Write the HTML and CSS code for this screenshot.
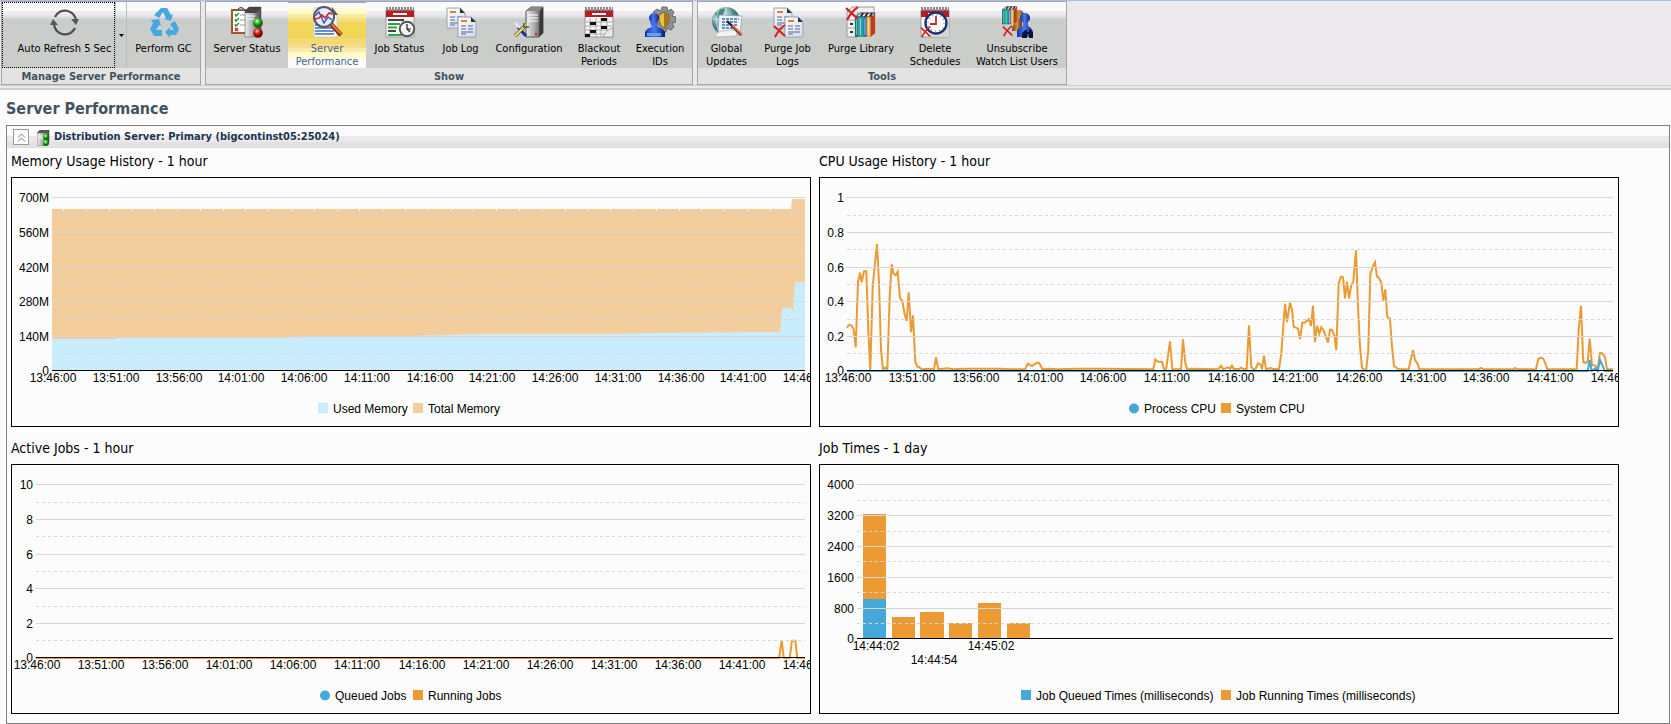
FILE: index.html
```html
<!DOCTYPE html>
<html lang="en">
<head>
<meta charset="utf-8">
<title>Server Performance</title>
<link rel="stylesheet" href="styles.css">
</head>
<body>
<svg class="defs" width="0" height="0" aria-hidden="true">
  <defs>
    <linearGradient id="steel" x1="0" x2="1"><stop offset="0" stop-color="#eee"/><stop offset=".5" stop-color="#aaa"/><stop offset="1" stop-color="#444"/></linearGradient>
    <linearGradient id="page" x1="0" y1="0" x2="1" y2="1"><stop offset="0" stop-color="#fff"/><stop offset="1" stop-color="#cfd9ee"/></linearGradient>
    <linearGradient id="blue" x1="0" x2="1"><stop offset="0" stop-color="#1230a8"/><stop offset=".45" stop-color="#4a78f0"/><stop offset="1" stop-color="#0c1c80"/></linearGradient>
    <linearGradient id="amber" x1="0" x2="1"><stop offset="0" stop-color="#6a4208"/><stop offset=".5" stop-color="#d09040"/><stop offset="1" stop-color="#5a3404"/></linearGradient>
    <radialGradient id="green" cx=".4" cy=".3"><stop offset="0" stop-color="#e0ffd8"/><stop offset=".5" stop-color="#38c828"/><stop offset="1" stop-color="#0a6a08"/></radialGradient>
    <radialGradient id="red" cx=".4" cy=".3"><stop offset="0" stop-color="#ffd8d0"/><stop offset=".5" stop-color="#e02820"/><stop offset="1" stop-color="#780804"/></radialGradient>
    <radialGradient id="globe" cx=".35" cy=".3"><stop offset="0" stop-color="#e4f4f4"/><stop offset=".6" stop-color="#86b4b8"/><stop offset="1" stop-color="#3e7480"/></radialGradient>
    <symbol id="cross" viewBox="0 0 14 14"><path d="M1 2L12 12M12 1Q6 5 2 13" fill="none" stroke="#d81c1c" stroke-width="2"/></symbol>
    <symbol id="sheet" viewBox="0 0 20 22"><path d="M1 1h13l5 5v15H1z" fill="url(#page)" stroke="#98a0b4"/><path d="M14 1v5h5z" fill="#333"/><path d="M4 5h6" stroke="#e88018" stroke-width="2"/><path d="M4 10h5M11 10h5M4 13h5M11 13h5M4 16h12M4 18h5" stroke="#5a6490" stroke-width="1.2"/></symbol>
    <symbol id="calendar" viewBox="0 0 32 32"><path d="M2 4h28v27H2z" fill="#f8f8fa" stroke="#999"/><path d="M2 4h28v7H2z" fill="#b81c24"/><path d="M2 3h28" stroke="#8a8a8c" stroke-width="4" stroke-dasharray="2 1"/><path d="M9 8h14" stroke="#fff" stroke-width="2"/></symbol>
    <symbol id="books" viewBox="0 0 24 28"><path d="M2 5L7 1h16l-2 4z" fill="#eee" stroke="#334"/><path d="M7 5l3-4M12 5l3-4M17 5l3-4" stroke="#222" stroke-width="2"/><path d="M1 5h4v22H1z" fill="#087868"/><path d="M5 5h5v22H5z" fill="#12a8a0"/><path d="M10 5h4v22h-4z" fill="#2868b0"/><path d="M14 5h4v22h-4z" fill="#f0b030"/><path d="M18 5l5-3v21l-5 4z" fill="#c03a20"/><path d="M3 7v18M7 7v18M12 7v18M16 7v18" stroke="#fff" stroke-opacity=".65"/></symbol>
  </defs>
</svg>

<header class="ribbon">
  <section class="group group-manage" aria-label="Manage Server Performance">
    <div class="tools">
      <button class="tool focused" type="button">
        <svg class="icon" viewBox="0 0 32 32"><g fill="none" stroke="#4c4e50" stroke-width="2.2"><path d="M6 11A11 11 0 0 1 27 15"/><path d="M26 22A11 11 0 0 1 5 18"/></g><path d="M22 13h8l-3 6zM1 19l3-6 5 6z" fill="#55585a"/></svg>
        <span>Auto Refresh 5 Sec</span>
      </button>
      <button class="tool arrow" type="button" aria-label="Auto refresh options"><svg viewBox="0 0 5 3" width="5" height="3"><path d="M0 0h5L2.500 3z"/></svg></button>
      <button class="tool" type="button">
        <svg class="icon" viewBox="0 0 32 32"><g fill="#46a8e0"><path d="M13 2h6l4 7 2-1-2 7-7-2 2-1-3-6-4 6-5-3z"/><path d="M27 15l4 8-3 6h-6v3l-5-6 5-5v3h4l-4-6z"/><path d="M3 14l8-1 2 7-2-1-3 5h6v6H6l-4-7 3-6z"/></g></svg>
        <span>Perform GC</span>
      </button>
    </div>
    <h2 class="caption">Manage Server Performance</h2>
  </section>

  <section class="group group-show" aria-label="Show">
    <div class="tools">
      <button class="tool" type="button">
        <svg class="icon" viewBox="0 0 32 32"><path d="M1 4h17v23H1z" fill="#fff" stroke="#9a5a30" stroke-width="2"/><path d="M6 4q4-5 8 0z" fill="#ccc" stroke="#444"/><path d="M4 8l1 2 3-3M4 13l1 2 3-3M4 18l1 2 3-3" fill="none" stroke="#1c9a30" stroke-width="1.400"/><path d="M4 22l3 3M7 22l-3 3" stroke="#d02020" stroke-width="1.400"/><path d="M9 9h5M9 14h5M9 19h5" stroke="#999"/><path d="M14 5l4-4h12v26l-4 4H14z" fill="url(#steel)" stroke="#666" stroke-width=".6"/><path d="M14 5l4-4h12l-4 6H14z" fill="#444"/><path d="M15 10h9M15 13h8" stroke="#fff"/><circle cx="27" cy="17" r="4.800" fill="url(#green)"/><circle cx="27" cy="27" r="4.800" fill="url(#red)"/></svg>
        <span>Server Status</span>
      </button>
      <button class="tool selected" type="button" aria-pressed="true">
        <svg class="icon" viewBox="0 0 32 32"><path d="M3 2h18l5 6v23H3z" fill="#fff" stroke="#c8ccd8"/><path d="M21 1l6 8h-6z" fill="#555"/><path d="M4 19h19M4 22h19M4 25h19M4 28h19" stroke="#3a6ab8" stroke-width="1.400"/><path d="M20 18l10 11" stroke="#802810" stroke-width="4.500"/><path d="M20 17.500L30 28" stroke="#e87038" stroke-width="2.500"/><circle cx="13" cy="11" r="10" fill="#e6ecfa" fill-opacity=".95" stroke="#55585e" stroke-width="2"/><path d="M4 10l4-4 5 11 4-6 4 3" fill="none" stroke="#3a58c0" stroke-width="1.500"/><path d="M4 13l4-1 3-3 3 3 4-5 3 1" fill="none" stroke="#d02828" stroke-width="1.600"/></svg>
        <span>Server Performance</span>
      </button>
      <button class="tool" type="button">
        <svg class="icon" viewBox="0 0 32 32"><use href="#calendar"/><path d="M4 14h16M4 25h8" stroke="#444" stroke-width="2"/><path d="M4 18h12M4 21.500h9M4 29h14" stroke="#2ca83c" stroke-width="2"/><path d="M17 16h12M20 29h9" stroke="#bbb"/><circle cx="23" cy="23" r="7.200" fill="#f4f4f4" stroke="#555" stroke-width="2"/><path d="M23 18v5h4M23 23l3 3" fill="none" stroke="#222" stroke-width="1.200"/></svg>
        <span>Job Status</span>
      </button>
      <button class="tool" type="button">
        <svg class="icon" viewBox="0 0 32 32"><use href="#sheet" x="1" y="1" width="20" height="22"/><use href="#sheet" x="12" y="10" width="20" height="22"/></svg>
        <span>Job Log</span>
      </button>
      <button class="tool" type="button">
        <svg class="icon" viewBox="0 0 32 32"><path d="M13 5l5-4h12v26l-4 4H13z" fill="url(#steel)" stroke="#555"/><path d="M13 5l5-4h12l-4 4z" fill="#888"/><path d="M27 5l3-4v26l-4 4z" fill="#383838"/><path d="M15 9h10M15 12h10M15 15h10" stroke="#fff"/><path d="M22 28h2" stroke="#c22" stroke-width="2"/><path d="M13 30L5 21" stroke="#1c2c98" stroke-width="3"/><path d="M2 17l5 5" stroke="#eef" stroke-width="2"/><path d="M2 30L12 20" stroke="#555" stroke-width="3.500"/><path d="M2 30L13 19" stroke="#eee060" stroke-width="2.200"/><path d="M11 17v4h5" fill="none" stroke="#5a5a30" stroke-width="1.500"/></svg>
        <span>Configuration</span>
      </button>
      <button class="tool" type="button">
        <svg class="icon" viewBox="0 0 32 32"><use href="#calendar"/><path d="M2 16h28M2 20h28M2 24h28M2 28h20M7 12v19M13 12v19M18 12v19M24 12v14" stroke="#aaa"/><path d="M18 12h6v3h-6zM7 16h6v3H7zM18 20h6v3h-6zM7 24h6v3H7zM2 28h5v3H2z" fill="#111"/><path d="M20 31q3-8 10-9v9z" fill="#e8e8e8" stroke="#888" stroke-width=".7"/></svg>
        <span>Blackout Periods</span>
      </button>
      <button class="tool" type="button">
        <svg class="icon" viewBox="0 0 32 32"><g fill="#8c9094" stroke="#55585c" stroke-width=".8"><path d="M18 1h5l1 4 3-2 3 3-2 4 4 1v5l-4 1 2 4-3 3-4-2-1 4h-4l-2-4-4 2-3-4 2-3-4-2v-5l4-1-2-3 4-3 4 2z"/></g><path d="M15 9l5-3 5 3v6q-1 5-5 7-4-2-5-7z" fill="#e8c040" stroke="#7a5a10"/><path d="M20 7v14q4-2 5-6V9z" fill="#a07820"/><path d="M1 31v-5q2-4 7-5l-2-5h8l-1 5q6 1 8 5v5z" fill="url(#blue)"/><circle cx="10" cy="12" r="5" fill="url(#blue)"/><path d="M3 27h14v3H3z" fill="#6a9cf8"/></svg>
        <span>Execution IDs</span>
      </button>
    </div>
    <h2 class="caption">Show</h2>
  </section>

  <section class="group group-tools" aria-label="Tools">
    <div class="tools">
      <button class="tool" type="button">
        <svg class="icon" viewBox="0 0 32 32"><circle cx="15" cy="15" r="14" fill="url(#globe)"/><path d="M4 8q5-6 10-5l-2 6-5 4zM20 4q6 3 8 9l-4-2z" fill="#4a8a78"/><path d="M15 1v14M2 13h26M8 3q-5 11 0 24" fill="none" stroke="#d8ecec" stroke-width=".8"/><path d="M8 9l23 1-2 19-22-1z" fill="#eef4fc" stroke="#8a98b0" stroke-width=".7"/><path d="M11 13h17M11 16h15M11 19h16M11 22h11" stroke="#3e70a8" stroke-width="1.300" stroke-dasharray="3 1"/><path d="M4 31q2-6 8-6l15-2-2 7z" fill="#f4f4f4" stroke="#aaa" stroke-width=".7"/><path d="M16 15l14 14" stroke="#222" stroke-width="2.400"/><path d="M21 19l10 10" stroke="#e86030" stroke-width="2"/></svg>
        <span>Global Updates</span>
      </button>
      <button class="tool" type="button">
        <svg class="icon" viewBox="0 0 32 32"><use href="#sheet" x="1" y="1" width="20" height="22"/><use href="#sheet" x="12" y="10" width="20" height="22"/><use href="#cross" x="1" y="18" width="14" height="14"/></svg>
        <span>Purge Job Logs</span>
      </button>
      <button class="tool" type="button">
        <svg class="icon" viewBox="0 0 32 32"><path d="M2 6l5-5h22v6H12v24H2z" fill="#f0f0f0" stroke="#999"/><path d="M2 14h9M2 22h9" stroke="#aaa"/><path d="M5 18h3M5 26h3" stroke="#333" stroke-width="2"/><use href="#books" x="9" y="6" width="22" height="26"/><use href="#cross" x="0" y="0" width="15" height="15"/></svg>
        <span>Purge Library</span>
      </button>
      <button class="tool" type="button">
        <svg class="icon" viewBox="0 0 32 32"><use href="#calendar"/><path d="M24 12h6v19H10z" fill="#d4d6dc"/><circle cx="17" cy="17" r="10.500" fill="#fff" stroke="#1a3470" stroke-width="2.400"/><circle cx="17" cy="17" r="8" fill="none" stroke="#444" stroke-dasharray="1 3.190"/><path d="M17 10v8h-6" fill="none" stroke="#c03028" stroke-width="1.800"/><use href="#cross" x="1" y="20" width="12" height="12"/></svg>
        <span>Delete Schedules</span>
      </button>
      <button class="tool" type="button">
        <svg class="icon" viewBox="0 0 32 32"><use href="#books" x="0" y="0" width="17" height="19"/><circle cx="18" cy="9" r="5" fill="url(#amber)"/><path d="M11 25q0-7 5-9v-3h5v12z" fill="url(#amber)"/><circle cx="24" cy="12" r="5" fill="url(#blue)"/><path d="M16 31v-6q2-4 6-5v-4h5v4q4 2 5 6v5z" fill="url(#blue)"/><path d="M21 32v-5l3-3h2v2h2v-2h2l2 3v5h-4v-4h-2v4z" fill="#0c1430"/><use href="#cross" x="1" y="19" width="12" height="12"/></svg>
        <span>Unsubscribe Watch List Users</span>
      </button>
    </div>
    <h2 class="caption">Tools</h2>
  </section>
</header>

<main class="content">
  <h1 class="title">Server Performance</h1>
  <section class="panel">
    <div class="panel-head">
      <button class="collapse" type="button" aria-label="Collapse section"><svg viewBox="0 0 9 9" width="9" height="9"><path d="M1 4.500l3.500-3.500L8 4.500M1 8.500L4.500 5L8 8.500" fill="none" stroke="#777"/></svg></button>
      <svg class="server" viewBox="0 0 14 16" width="14" height="16"><path d="M0 3l3-3h9v12l-3 4H0z" fill="url(#steel)" stroke="#555" stroke-width=".6"/><path d="M0 3l3-3h9L9 3z" fill="#555"/><path d="M1 6h5M1 8h5" stroke="#fff"/><circle cx="9" cy="7" r="3" fill="url(#green)"/><circle cx="9" cy="13" r="3" fill="url(#green)"/></svg>
      <h2 class="panel-title">Distribution Server: Primary (bigcontinst05:25024)</h2>
    </div>
    <div class="charts">
      <article class="chart"><h3>Memory Usage History - 1 hour</h3><div class="plot" id="memory"></div></article>
      <article class="chart"><h3>CPU Usage History - 1 hour</h3><div class="plot" id="cpu"></div></article>
      <article class="chart"><h3>Active Jobs - 1 hour</h3><div class="plot" id="jobs"></div></article>
      <article class="chart"><h3>Job Times - 1 day</h3><div class="plot" id="times"></div></article>
    </div>
  </section>
</main>
<script src="script.js"></script>
</body>
</html>
```
FILE: styles.css
```css
* { box-sizing: border-box; }
body {
  margin: 0;
  background: #fcfcfc;
  color: #000;
  font-family: "DejaVu Sans Condensed", "DejaVu Sans", Tahoma, sans-serif;
  font-size: 11px;
}
h1, h2, h3 { margin: 0; }
button { font: inherit; color: inherit; }
.defs { position: absolute; }

.ribbon {
  display: flex;
  gap: 4px;
  padding: 0 1px 4px;
  background: linear-gradient(#d0d0d2, #d0d0d2) 0 100% / 100% 2px no-repeat,
    linear-gradient(#ccc, #ccc) 0 calc(100% - 4px) / 100% 1px no-repeat, #ece9ed;
  border-top: 1px solid #a9bfe6;
}
.group { border: 1px solid #a7a3a9; margin-bottom: 1px; }
.tools {
  display: grid;
  height: 66px;
  background: linear-gradient(#fbfbfc 0 9px, #ececf0 9px 12px, #d9dae1 16px, #cbcdca 17px);
}
.group-manage .tools { grid-template-columns: 113px 12px 73px; }
.group-show .tools { grid-template-columns: 82px 78px 67px 55px 82px 58px 64px; }
.group-tools .tools { grid-template-columns: 57px 65px 82px 66px 98px; }
.tool {
  display: flex;
  flex-direction: column;
  align-items: center;
  gap: 4px;
  padding: 4px 4px 0;
  border: 0;
  background: none;
  line-height: 13px;
  text-align: center;
}
.icon { flex: none; width: 32px; height: 32px; }
.focused {
  outline: 1px dotted #000;
  outline-offset: -1px;
  padding: 4px 2px 0 14px;
  white-space: nowrap;
}
.arrow { justify-content: center; padding: 0; border: 1px solid #b4c0c4; border-width: 0 1px; }
.selected {
  color: #46648c;
  background: linear-gradient(#a8a8a8 0 1px, #fbfbfb 1px 6px, #fffdc9 6px 12px, #f9eaa2 12px 16px, #f4de7c 16px 20px, #f2d658 20px 36px, #f3d970 36px 42px, #f6dc90 42px 46px, #fbebaa 46px 50px, #fffcc9 50px 56px, #fbfbfb 56px);
}
.caption {
  padding-top: 2px;
  background: #e3e3e3;
  color: #44525e;
  font-size: 11px;
  line-height: 14px;
  text-align: center;
}

.content { padding: 0 1px 0 6px; }
.title {
  padding: 9px 0 6px;
  color: #435361;
  font-size: 16px;
  line-height: 20px;
}
.panel { border: 1px solid #808080; padding-bottom: 9px; }
.panel-head {
  display: flex;
  align-items: center;
  height: 22px;
  padding-left: 6px;
  background: linear-gradient(#fcfcfc 0 10px, #ebe9ec 10px 16px, #e2e2e2 16px 21px, #dadce2 21px);
}
.collapse {
  display: grid;
  place-items: center;
  width: 16px;
  height: 16px;
  padding: 0;
  border: 1px solid #999;
  background: #fff;
}
.server { margin: 2px 3px 0 8px; }
.panel-title { color: #1c3550; font-size: 11px; line-height: 16px; }
.charts {
  display: grid;
  grid-template-columns: 1fr 1fr;
  column-gap: 8px;
  padding: 0 50px 0 4px;
}
.chart h3 {
  padding: 4px 0 7px;
  font-size: 14px;
  font-weight: normal;
  line-height: 18px;
}
.chart:nth-child(n+3) h3 { padding-top: 12px; }
.plot svg { display: block; width: 100%; height: auto; }
.plot text { font: 12px "Liberation Sans", Arial, sans-serif; }
```
FILE: script.js
```javascript
const NS = "http://www.w3.org/2000/svg";
const RIGHT = 794;
const BLUE = "#44a9d8";
const ORANGE = "#ec9a33";

function add(parent, name, attrs, text) {
  const el = document.createElementNS(NS, name);
  for (const key in attrs) el.setAttribute(key, attrs[key]);
  if (text !== undefined) el.textContent = text;
  parent.appendChild(el);
  return el;
}

// Traces are sampled at three units per chart pixel from an origin of their own.
function trace(svg, dx, dy, samples, color) {
  const points = samples.trim().split(/\s+/).map(p => {
    const [x, y] = p.split(",").map(Number);
    return (x / 3 + dx).toFixed(1) + "," + (y / 3 + dy).toFixed(1);
  });
  add(svg, "polyline", { points: points.join(" "), fill: "none", stroke: color, "stroke-width": 2 });
}

function chart(id, o) {
  const svg = add(document.getElementById(id), "svg", { viewBox: "0 0 800 250", role: "img" });
  o.draw(svg);
  for (let i = 0; i < 10; i++) {
    const y = Math.round(20.4 + i * o.step) + 0.5;
    const line = add(svg, "line", { x1: o.left, x2: RIGHT, y1: y, y2: y, stroke: "#d6d6d6", "shape-rendering": "crispEdges" });
    if (i % 2) line.setAttribute("stroke-dasharray", "3 3");
  }
  const base = Math.round(20.4 + 10 * o.step);
  add(svg, "rect", { x: o.left, y: base, width: RIGHT - o.left, height: 1 });
  o.labels.forEach((label, i) => {
    add(svg, "text", { x: o.left - 3, y: Math.round(20.4 + 2 * i * o.step) + 5, "text-anchor": "end" }, label);
  });
  o.ticks.forEach(([x, y, label]) => add(svg, "text", { x, y, "text-anchor": "middle" }, label));
  o.legend.forEach(([x, tx, color, label, round]) => {
    if (round) add(svg, "circle", { cx: x + 5, cy: 231.5, r: 5, fill: color });
    else add(svg, "rect", { x, y: 226, width: 10, height: 10, fill: color });
    add(svg, "text", { x: tx, y: 236 }, label);
  });
  add(svg, "rect", { x: 0.5, y: 0.5, width: 799, height: 249, fill: "none", stroke: "#000" });
}

function hourTicks(left) {
  const ticks = [];
  for (let i = 0; i <= 12; i++) {
    const m = 46 + i * 5;
    const label = (13 + Math.floor(m / 60)) + ":" + String(m % 60).padStart(2, "0") + ":00";
    ticks.push([Math.round(left + i * (RIGHT - left) / 12) + 1, 205, label]);
  }
  return ticks;
}

chart("memory", {
  left: 41, step: 17.3,
  labels: ["700M", "560M", "420M", "280M", "140M", "0"],
  ticks: hourTicks(41),
  legend: [[307, 322, "#caedfe", "Used Memory"], [402, 417, "#f4cd9d", "Total Memory"]],
  draw(svg) {
    add(svg, "polygon", { points: "41,32 780,32 781,22 794,22 794,193 41,193", fill: "#f4cd9d" });
    for (let i = 0; i < 32; i++) add(svg, "rect", { x: Math.round(52 + i * 22.8), y: 32, width: 1, height: 2, fill: "#fcfcfc" });
    add(svg, "polygon", { points: "41,162 105,162 105,161 269,161 299,160 400,159 474,157 609,157 637,156 745,155 769,155 771,131 780,131 782,134 784,105 794,105 794,193 41,193", fill: "#caedfe" });
  }
});

chart("cpu", {
  left: 28, step: 17.3,
  labels: ["1", "0.8", "0.6", "0.4", "0.2", "0"],
  ticks: hourTicks(28),
  legend: [[310, 325, BLUE, "Process CPU", true], [402, 417, ORANGE, "System CPU"]],
  draw(svg) {
    trace(svg, -9, -7, `110,473 118,464 125,467 131,478 137,532 144,336 150,308 155,337 162,304 169,304 175,480
      181,600 188,350 195,280 201,222 207,340 213,540 219,598 226,593 232,600 239,380 245,283 250,310 257,316
      263,305 270,384 277,393 284,433 290,453 296,367 303,487 309,436 316,575 322,590 328,591 334,598 354,596
      372,598 378,562 385,598 413,595 430,598 462,596 570,596 600,598 646,598 653,581 666,588 680,578 688,579
      697,598 717,596 740,598 800,596 880,596 1030,598 1036,568 1044,575 1056,575 1063,600 1068,600 1080,514
      1087,598 1113,598 1119,508 1126,580 1132,598 1145,596 1225,598 1233,587 1240,598 1253,592 1260,597
      1266,587 1272,598`, ORANGE);
    trace(svg, 411, -57, `0,745 5,738 12,747 27,747 34,743 40,747 50,747 57,616 64,742 72,748 78,744 84,730
      91,733 96,745 102,707 108,748 122,744 128,747 147,747 154,700 165,551 171,606 180,548 186,568 191,620
      204,626 210,657 217,608 224,608 237,598 243,618 249,557 255,666 261,617 268,642 274,622 282,634 294,668
      300,629 306,630 313,645 319,690 326,490 333,470 339,472 345,535 351,485 357,535 364,495 370,485 378,391
      384,560 390,680 396,743 402,750 409,748 415,690 421,463 428,440 435,427 441,470 447,474 454,488 460,542
      466,508 472,590 480,597 486,680 492,738 500,744 506,748 536,748 542,720 549,690 555,720 562,730 568,748
      745,748 753,744 760,748 850,748 855,744 862,748 918,748 925,717 932,713 940,716 946,730 952,748 1040,748
      1046,630 1053,557 1060,726 1067,729 1073,725 1079,656 1086,735 1094,736 1103,745 1110,698 1117,700
      1125,712 1131,748 1150,748`, ORANGE);
    trace(svg, 411, -57, "-1149,753 1073,753 1079,720 1085,753 1096,745 1103,753 1110,720 1117,735 1124,753 1149,753", BLUE);
  }
});

chart("jobs", {
  left: 25, step: 17.3,
  labels: ["10", "8", "6", "4", "2", "0"],
  ticks: hourTicks(25),
  legend: [[309, 324, BLUE, "Queued Jobs", true], [402, 417, ORANGE, "Running Jobs"]],
  draw(svg) {
    trace(svg, 589, -34, "-1693,684 537,684 545,632 551,684 569,684 576,632 586,632 592,684 615,684", ORANGE);
  }
});

chart("times", {
  left: 38, step: 15.4,
  labels: ["4000", "3200", "2400", "1600", "800", "0"],
  ticks: [[57, 186, "14:44:02"], [115, 200, "14:44:54"], [172, 186, "14:45:02"]],
  legend: [[202, 217, BLUE, "Job Queued Times (milliseconds)"], [402, 417, ORANGE, "Job Running Times (milliseconds)"]],
  draw(svg) {
    [[44, 50, 23], [73, 153, 23], [101, 148, 24], [130, 159, 23], [159, 139, 23], [188, 159, 23]]
      .forEach(([x, y, width]) => add(svg, "rect", { x, y, width, height: 174 - y, fill: ORANGE }));
    add(svg, "rect", { x: 44, y: 135, width: 23, height: 39, fill: BLUE });
  }
});
```
